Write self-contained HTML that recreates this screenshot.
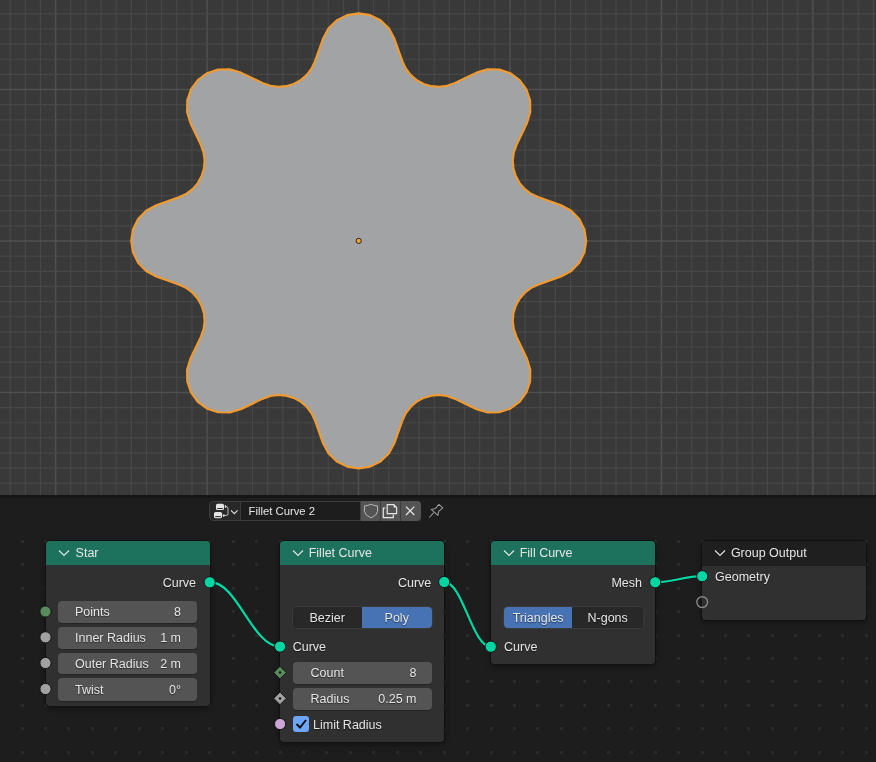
<!DOCTYPE html><html><head><meta charset="utf-8"><style>
*{margin:0;padding:0;box-sizing:border-box}
html,body{width:876px;height:762px;overflow:hidden;background:#1d1d1d;font-family:"Liberation Sans",sans-serif}
#root{position:absolute;left:0;top:0;width:876px;height:762px;will-change:transform}
.node{position:absolute;background:#303030;border-radius:4px;box-shadow:0 0 0 1px #111,0 2px 6px rgba(0,0,0,.45)}
.nh{position:absolute;left:0;top:0;right:0;height:24px;border-radius:4px 4px 0 0}
.chev{position:absolute;left:12.2px;top:8.1px}
.nt{position:absolute;left:28.7px;top:5px;font-size:12.5px;color:#e5e5e5;white-space:nowrap}
.t{position:absolute;white-space:nowrap;line-height:14px;text-shadow:0 1px 1px rgba(0,0,0,.5)}
.fld{position:absolute;background:#545454;border-radius:4px;box-shadow:0 1px 0 rgba(0,0,0,.25)}
.radio{position:absolute;display:flex;border-radius:4px;overflow:hidden;box-shadow:0 0 0 1px #3a3a3a}
.ro{height:100%;background:#282828;color:#e5e5e5;font-size:12.5px;text-align:center;line-height:22.3px;text-shadow:0 1px 1px rgba(0,0,0,.5)}
.ro.sel{background:#4772b3}
.chk{position:absolute;background:#6ea5f7;border-radius:3px}
.hdrw{position:absolute;border-radius:4px;overflow:hidden;display:flex}
.menu{position:relative;width:32px;height:100%;background:#282828;border:1px solid #3d3d3d;border-right:1px solid #3d3d3d;border-radius:4px 0 0 4px}
.tf{width:119px;height:100%;background:#1d1d1d;color:#e5e5e5;font-size:11.3px;line-height:19px;padding-left:7.5px;border-top:1px solid #3d3d3d;border-bottom:1px solid #3d3d3d}
.btns{flex:1;display:flex;background:#545454}
.menu,.tf{flex-shrink:0}.btns>div{flex:1;min-width:0;position:relative;border-left:1px solid #3d3d3d}.btns svg{display:block;position:absolute;top:0;left:0}
</style></head><body><div id="root">
<svg width="876" height="495" style="position:absolute;left:0;top:0;display:block">
<rect width="876" height="495" fill="#393939"/>
<line x1="-4.98" y1="0" x2="-4.98" y2="495" stroke="#474747" stroke-width="1.2"/><line x1="10.17" y1="0" x2="10.17" y2="495" stroke="#474747" stroke-width="1.2"/><line x1="25.31" y1="0" x2="25.31" y2="495" stroke="#474747" stroke-width="1.2"/><line x1="40.45" y1="0" x2="40.45" y2="495" stroke="#474747" stroke-width="1.2"/><line x1="55.60" y1="0" x2="55.60" y2="495" stroke="#505050" stroke-width="1.5"/><line x1="70.75" y1="0" x2="70.75" y2="495" stroke="#474747" stroke-width="1.2"/><line x1="85.89" y1="0" x2="85.89" y2="495" stroke="#474747" stroke-width="1.2"/><line x1="101.04" y1="0" x2="101.04" y2="495" stroke="#474747" stroke-width="1.2"/><line x1="116.18" y1="0" x2="116.18" y2="495" stroke="#474747" stroke-width="1.2"/><line x1="131.33" y1="0" x2="131.33" y2="495" stroke="#474747" stroke-width="1.2"/><line x1="146.47" y1="0" x2="146.47" y2="495" stroke="#474747" stroke-width="1.2"/><line x1="161.62" y1="0" x2="161.62" y2="495" stroke="#474747" stroke-width="1.2"/><line x1="176.76" y1="0" x2="176.76" y2="495" stroke="#474747" stroke-width="1.2"/><line x1="191.91" y1="0" x2="191.91" y2="495" stroke="#474747" stroke-width="1.2"/><line x1="207.05" y1="0" x2="207.05" y2="495" stroke="#505050" stroke-width="1.5"/><line x1="222.19" y1="0" x2="222.19" y2="495" stroke="#474747" stroke-width="1.2"/><line x1="237.34" y1="0" x2="237.34" y2="495" stroke="#474747" stroke-width="1.2"/><line x1="252.49" y1="0" x2="252.49" y2="495" stroke="#474747" stroke-width="1.2"/><line x1="267.63" y1="0" x2="267.63" y2="495" stroke="#474747" stroke-width="1.2"/><line x1="282.77" y1="0" x2="282.77" y2="495" stroke="#474747" stroke-width="1.2"/><line x1="297.92" y1="0" x2="297.92" y2="495" stroke="#474747" stroke-width="1.2"/><line x1="313.06" y1="0" x2="313.06" y2="495" stroke="#474747" stroke-width="1.2"/><line x1="328.21" y1="0" x2="328.21" y2="495" stroke="#474747" stroke-width="1.2"/><line x1="343.36" y1="0" x2="343.36" y2="495" stroke="#474747" stroke-width="1.2"/><line x1="358.50" y1="0" x2="358.50" y2="495" stroke="#505050" stroke-width="1.5"/><line x1="373.64" y1="0" x2="373.64" y2="495" stroke="#474747" stroke-width="1.2"/><line x1="388.79" y1="0" x2="388.79" y2="495" stroke="#474747" stroke-width="1.2"/><line x1="403.94" y1="0" x2="403.94" y2="495" stroke="#474747" stroke-width="1.2"/><line x1="419.08" y1="0" x2="419.08" y2="495" stroke="#474747" stroke-width="1.2"/><line x1="434.23" y1="0" x2="434.23" y2="495" stroke="#474747" stroke-width="1.2"/><line x1="449.37" y1="0" x2="449.37" y2="495" stroke="#474747" stroke-width="1.2"/><line x1="464.51" y1="0" x2="464.51" y2="495" stroke="#474747" stroke-width="1.2"/><line x1="479.66" y1="0" x2="479.66" y2="495" stroke="#474747" stroke-width="1.2"/><line x1="494.81" y1="0" x2="494.81" y2="495" stroke="#474747" stroke-width="1.2"/><line x1="509.95" y1="0" x2="509.95" y2="495" stroke="#505050" stroke-width="1.5"/><line x1="525.10" y1="0" x2="525.10" y2="495" stroke="#474747" stroke-width="1.2"/><line x1="540.24" y1="0" x2="540.24" y2="495" stroke="#474747" stroke-width="1.2"/><line x1="555.38" y1="0" x2="555.38" y2="495" stroke="#474747" stroke-width="1.2"/><line x1="570.53" y1="0" x2="570.53" y2="495" stroke="#474747" stroke-width="1.2"/><line x1="585.67" y1="0" x2="585.67" y2="495" stroke="#474747" stroke-width="1.2"/><line x1="600.82" y1="0" x2="600.82" y2="495" stroke="#474747" stroke-width="1.2"/><line x1="615.96" y1="0" x2="615.96" y2="495" stroke="#474747" stroke-width="1.2"/><line x1="631.11" y1="0" x2="631.11" y2="495" stroke="#474747" stroke-width="1.2"/><line x1="646.25" y1="0" x2="646.25" y2="495" stroke="#474747" stroke-width="1.2"/><line x1="661.40" y1="0" x2="661.40" y2="495" stroke="#505050" stroke-width="1.5"/><line x1="676.55" y1="0" x2="676.55" y2="495" stroke="#474747" stroke-width="1.2"/><line x1="691.69" y1="0" x2="691.69" y2="495" stroke="#474747" stroke-width="1.2"/><line x1="706.84" y1="0" x2="706.84" y2="495" stroke="#474747" stroke-width="1.2"/><line x1="721.98" y1="0" x2="721.98" y2="495" stroke="#474747" stroke-width="1.2"/><line x1="737.12" y1="0" x2="737.12" y2="495" stroke="#474747" stroke-width="1.2"/><line x1="752.27" y1="0" x2="752.27" y2="495" stroke="#474747" stroke-width="1.2"/><line x1="767.41" y1="0" x2="767.41" y2="495" stroke="#474747" stroke-width="1.2"/><line x1="782.56" y1="0" x2="782.56" y2="495" stroke="#474747" stroke-width="1.2"/><line x1="797.70" y1="0" x2="797.70" y2="495" stroke="#474747" stroke-width="1.2"/><line x1="812.85" y1="0" x2="812.85" y2="495" stroke="#505050" stroke-width="1.5"/><line x1="828.00" y1="0" x2="828.00" y2="495" stroke="#474747" stroke-width="1.2"/><line x1="843.14" y1="0" x2="843.14" y2="495" stroke="#474747" stroke-width="1.2"/><line x1="858.28" y1="0" x2="858.28" y2="495" stroke="#474747" stroke-width="1.2"/><line x1="873.43" y1="0" x2="873.43" y2="495" stroke="#474747" stroke-width="1.2"/><line x1="888.57" y1="0" x2="888.57" y2="495" stroke="#474747" stroke-width="1.2"/><line x1="0" y1="-1.32" x2="876" y2="-1.32" stroke="#474747" stroke-width="1.2"/><line x1="0" y1="13.83" x2="876" y2="13.83" stroke="#474747" stroke-width="1.2"/><line x1="0" y1="28.97" x2="876" y2="28.97" stroke="#474747" stroke-width="1.2"/><line x1="0" y1="44.12" x2="876" y2="44.12" stroke="#474747" stroke-width="1.2"/><line x1="0" y1="59.26" x2="876" y2="59.26" stroke="#474747" stroke-width="1.2"/><line x1="0" y1="74.41" x2="876" y2="74.41" stroke="#474747" stroke-width="1.2"/><line x1="0" y1="89.55" x2="876" y2="89.55" stroke="#505050" stroke-width="1.5"/><line x1="0" y1="104.69" x2="876" y2="104.69" stroke="#474747" stroke-width="1.2"/><line x1="0" y1="119.84" x2="876" y2="119.84" stroke="#474747" stroke-width="1.2"/><line x1="0" y1="134.99" x2="876" y2="134.99" stroke="#474747" stroke-width="1.2"/><line x1="0" y1="150.13" x2="876" y2="150.13" stroke="#474747" stroke-width="1.2"/><line x1="0" y1="165.28" x2="876" y2="165.28" stroke="#474747" stroke-width="1.2"/><line x1="0" y1="180.42" x2="876" y2="180.42" stroke="#474747" stroke-width="1.2"/><line x1="0" y1="195.56" x2="876" y2="195.56" stroke="#474747" stroke-width="1.2"/><line x1="0" y1="210.71" x2="876" y2="210.71" stroke="#474747" stroke-width="1.2"/><line x1="0" y1="225.85" x2="876" y2="225.85" stroke="#474747" stroke-width="1.2"/><line x1="0" y1="241.00" x2="876" y2="241.00" stroke="#505050" stroke-width="1.5"/><line x1="0" y1="256.14" x2="876" y2="256.14" stroke="#474747" stroke-width="1.2"/><line x1="0" y1="271.29" x2="876" y2="271.29" stroke="#474747" stroke-width="1.2"/><line x1="0" y1="286.44" x2="876" y2="286.44" stroke="#474747" stroke-width="1.2"/><line x1="0" y1="301.58" x2="876" y2="301.58" stroke="#474747" stroke-width="1.2"/><line x1="0" y1="316.73" x2="876" y2="316.73" stroke="#474747" stroke-width="1.2"/><line x1="0" y1="331.87" x2="876" y2="331.87" stroke="#474747" stroke-width="1.2"/><line x1="0" y1="347.01" x2="876" y2="347.01" stroke="#474747" stroke-width="1.2"/><line x1="0" y1="362.16" x2="876" y2="362.16" stroke="#474747" stroke-width="1.2"/><line x1="0" y1="377.31" x2="876" y2="377.31" stroke="#474747" stroke-width="1.2"/><line x1="0" y1="392.45" x2="876" y2="392.45" stroke="#505050" stroke-width="1.5"/><line x1="0" y1="407.60" x2="876" y2="407.60" stroke="#474747" stroke-width="1.2"/><line x1="0" y1="422.74" x2="876" y2="422.74" stroke="#474747" stroke-width="1.2"/><line x1="0" y1="437.88" x2="876" y2="437.88" stroke="#474747" stroke-width="1.2"/><line x1="0" y1="453.03" x2="876" y2="453.03" stroke="#474747" stroke-width="1.2"/><line x1="0" y1="468.17" x2="876" y2="468.17" stroke="#474747" stroke-width="1.2"/><line x1="0" y1="483.32" x2="876" y2="483.32" stroke="#474747" stroke-width="1.2"/><line x1="0" y1="498.46" x2="876" y2="498.46" stroke="#474747" stroke-width="1.2"/>
<polygon points="561.08,276.54 571.27,271.04 579.31,262.71 584.46,252.34 586.23,240.90 584.46,229.46 579.31,219.09 571.27,210.76 561.08,205.26 537.96,197.04 530.84,193.63 524.58,188.82 519.45,182.81 515.69,175.87 513.44,168.30 512.82,160.43 513.84,152.61 516.47,145.16 527.01,122.99 530.32,111.90 530.12,100.32 526.43,89.35 519.59,80.01 510.25,73.17 499.28,69.48 487.70,69.28 476.61,72.59 454.44,83.13 446.99,85.76 439.17,86.78 431.30,86.16 423.73,83.91 416.79,80.15 410.78,75.02 405.97,68.76 402.56,61.64 394.34,38.52 388.84,28.33 380.51,20.29 370.14,15.14 358.70,13.37 347.26,15.14 336.89,20.29 328.56,28.33 323.06,38.52 314.84,61.64 311.43,68.76 306.62,75.02 300.61,80.15 293.67,83.91 286.10,86.16 278.23,86.78 270.41,85.76 262.96,83.13 240.79,72.59 229.70,69.28 218.12,69.48 207.15,73.17 197.81,80.01 190.97,89.35 187.28,100.32 187.08,111.90 190.39,122.99 200.93,145.16 203.56,152.61 204.58,160.43 203.96,168.30 201.71,175.87 197.95,182.81 192.82,188.82 186.56,193.63 179.44,197.04 156.32,205.26 146.13,210.76 138.09,219.09 132.94,229.46 131.17,240.90 132.94,252.34 138.09,262.71 146.13,271.04 156.32,276.54 179.44,284.76 186.56,288.17 192.82,292.98 197.95,298.99 201.71,305.93 203.96,313.50 204.58,321.37 203.56,329.19 200.93,336.64 190.39,358.81 187.08,369.90 187.28,381.48 190.97,392.45 197.81,401.79 207.15,408.63 218.12,412.32 229.70,412.52 240.79,409.21 262.96,398.67 270.41,396.04 278.23,395.02 286.10,395.64 293.67,397.89 300.61,401.65 306.62,406.78 311.43,413.04 314.84,420.16 323.06,443.28 328.56,453.47 336.89,461.51 347.26,466.66 358.70,468.43 370.14,466.66 380.51,461.51 388.84,453.47 394.34,443.28 402.56,420.16 405.97,413.04 410.78,406.78 416.79,401.65 423.73,397.89 431.30,395.64 439.17,395.02 446.99,396.04 454.44,398.67 476.61,409.21 487.70,412.52 499.28,412.32 510.25,408.63 519.59,401.79 526.43,392.45 530.12,381.48 530.32,369.90 527.01,358.81 516.47,336.64 513.84,329.19 512.82,321.37 513.44,313.50 515.69,305.93 519.45,298.99 524.58,292.98 530.84,288.17 537.96,284.76" fill="#a2a3a5" stroke="#f29a2e" stroke-width="2.1" stroke-linejoin="round"/>
<circle cx="358.7" cy="240.9" r="2.6" fill="#f7a12a" stroke="#2a2a2a" stroke-width="1"/>
</svg>
<div style="position:absolute;left:0;top:495px;width:876px;height:2.5px;background:#161616"></div>
<svg width="876" height="762" style="position:absolute;left:0;top:0"><rect x="21" y="540" width="3" height="3" fill="#2b2b2b"/><rect x="44" y="540" width="3" height="3" fill="#2b2b2b"/><rect x="67" y="540" width="3" height="3" fill="#2b2b2b"/><rect x="91" y="540" width="3" height="3" fill="#2b2b2b"/><rect x="114" y="540" width="3" height="3" fill="#2b2b2b"/><rect x="138" y="540" width="3" height="3" fill="#2b2b2b"/><rect x="161" y="540" width="3" height="3" fill="#2b2b2b"/><rect x="185" y="540" width="3" height="3" fill="#2b2b2b"/><rect x="208" y="540" width="3" height="3" fill="#2b2b2b"/><rect x="232" y="540" width="3" height="3" fill="#2b2b2b"/><rect x="255" y="540" width="3" height="3" fill="#2b2b2b"/><rect x="279" y="540" width="3" height="3" fill="#2b2b2b"/><rect x="302" y="540" width="3" height="3" fill="#2b2b2b"/><rect x="325" y="540" width="3" height="3" fill="#2b2b2b"/><rect x="349" y="540" width="3" height="3" fill="#2b2b2b"/><rect x="372" y="540" width="3" height="3" fill="#2b2b2b"/><rect x="396" y="540" width="3" height="3" fill="#2b2b2b"/><rect x="419" y="540" width="3" height="3" fill="#2b2b2b"/><rect x="443" y="540" width="3" height="3" fill="#2b2b2b"/><rect x="466" y="540" width="3" height="3" fill="#2b2b2b"/><rect x="490" y="540" width="3" height="3" fill="#2b2b2b"/><rect x="513" y="540" width="3" height="3" fill="#2b2b2b"/><rect x="536" y="540" width="3" height="3" fill="#2b2b2b"/><rect x="560" y="540" width="3" height="3" fill="#2b2b2b"/><rect x="583" y="540" width="3" height="3" fill="#2b2b2b"/><rect x="607" y="540" width="3" height="3" fill="#2b2b2b"/><rect x="630" y="540" width="3" height="3" fill="#2b2b2b"/><rect x="654" y="540" width="3" height="3" fill="#2b2b2b"/><rect x="677" y="540" width="3" height="3" fill="#2b2b2b"/><rect x="701" y="540" width="3" height="3" fill="#2b2b2b"/><rect x="724" y="540" width="3" height="3" fill="#2b2b2b"/><rect x="747" y="540" width="3" height="3" fill="#2b2b2b"/><rect x="771" y="540" width="3" height="3" fill="#2b2b2b"/><rect x="794" y="540" width="3" height="3" fill="#2b2b2b"/><rect x="818" y="540" width="3" height="3" fill="#2b2b2b"/><rect x="841" y="540" width="3" height="3" fill="#2b2b2b"/><rect x="865" y="540" width="3" height="3" fill="#2b2b2b"/><rect x="21" y="563" width="3" height="3" fill="#2b2b2b"/><rect x="44" y="563" width="3" height="3" fill="#2b2b2b"/><rect x="67" y="563" width="3" height="3" fill="#2b2b2b"/><rect x="91" y="563" width="3" height="3" fill="#2b2b2b"/><rect x="114" y="563" width="3" height="3" fill="#2b2b2b"/><rect x="138" y="563" width="3" height="3" fill="#2b2b2b"/><rect x="161" y="563" width="3" height="3" fill="#2b2b2b"/><rect x="185" y="563" width="3" height="3" fill="#2b2b2b"/><rect x="208" y="563" width="3" height="3" fill="#2b2b2b"/><rect x="232" y="563" width="3" height="3" fill="#2b2b2b"/><rect x="255" y="563" width="3" height="3" fill="#2b2b2b"/><rect x="279" y="563" width="3" height="3" fill="#2b2b2b"/><rect x="302" y="563" width="3" height="3" fill="#2b2b2b"/><rect x="325" y="563" width="3" height="3" fill="#2b2b2b"/><rect x="349" y="563" width="3" height="3" fill="#2b2b2b"/><rect x="372" y="563" width="3" height="3" fill="#2b2b2b"/><rect x="396" y="563" width="3" height="3" fill="#2b2b2b"/><rect x="419" y="563" width="3" height="3" fill="#2b2b2b"/><rect x="443" y="563" width="3" height="3" fill="#2b2b2b"/><rect x="466" y="563" width="3" height="3" fill="#2b2b2b"/><rect x="490" y="563" width="3" height="3" fill="#2b2b2b"/><rect x="513" y="563" width="3" height="3" fill="#2b2b2b"/><rect x="536" y="563" width="3" height="3" fill="#2b2b2b"/><rect x="560" y="563" width="3" height="3" fill="#2b2b2b"/><rect x="583" y="563" width="3" height="3" fill="#2b2b2b"/><rect x="607" y="563" width="3" height="3" fill="#2b2b2b"/><rect x="630" y="563" width="3" height="3" fill="#2b2b2b"/><rect x="654" y="563" width="3" height="3" fill="#2b2b2b"/><rect x="677" y="563" width="3" height="3" fill="#2b2b2b"/><rect x="701" y="563" width="3" height="3" fill="#2b2b2b"/><rect x="724" y="563" width="3" height="3" fill="#2b2b2b"/><rect x="747" y="563" width="3" height="3" fill="#2b2b2b"/><rect x="771" y="563" width="3" height="3" fill="#2b2b2b"/><rect x="794" y="563" width="3" height="3" fill="#2b2b2b"/><rect x="818" y="563" width="3" height="3" fill="#2b2b2b"/><rect x="841" y="563" width="3" height="3" fill="#2b2b2b"/><rect x="865" y="563" width="3" height="3" fill="#2b2b2b"/><rect x="21" y="587" width="3" height="3" fill="#2b2b2b"/><rect x="44" y="587" width="3" height="3" fill="#2b2b2b"/><rect x="67" y="587" width="3" height="3" fill="#2b2b2b"/><rect x="91" y="587" width="3" height="3" fill="#2b2b2b"/><rect x="114" y="587" width="3" height="3" fill="#2b2b2b"/><rect x="138" y="587" width="3" height="3" fill="#2b2b2b"/><rect x="161" y="587" width="3" height="3" fill="#2b2b2b"/><rect x="185" y="587" width="3" height="3" fill="#2b2b2b"/><rect x="208" y="587" width="3" height="3" fill="#2b2b2b"/><rect x="232" y="587" width="3" height="3" fill="#2b2b2b"/><rect x="255" y="587" width="3" height="3" fill="#2b2b2b"/><rect x="279" y="587" width="3" height="3" fill="#2b2b2b"/><rect x="302" y="587" width="3" height="3" fill="#2b2b2b"/><rect x="325" y="587" width="3" height="3" fill="#2b2b2b"/><rect x="349" y="587" width="3" height="3" fill="#2b2b2b"/><rect x="372" y="587" width="3" height="3" fill="#2b2b2b"/><rect x="396" y="587" width="3" height="3" fill="#2b2b2b"/><rect x="419" y="587" width="3" height="3" fill="#2b2b2b"/><rect x="443" y="587" width="3" height="3" fill="#2b2b2b"/><rect x="466" y="587" width="3" height="3" fill="#2b2b2b"/><rect x="490" y="587" width="3" height="3" fill="#2b2b2b"/><rect x="513" y="587" width="3" height="3" fill="#2b2b2b"/><rect x="536" y="587" width="3" height="3" fill="#2b2b2b"/><rect x="560" y="587" width="3" height="3" fill="#2b2b2b"/><rect x="583" y="587" width="3" height="3" fill="#2b2b2b"/><rect x="607" y="587" width="3" height="3" fill="#2b2b2b"/><rect x="630" y="587" width="3" height="3" fill="#2b2b2b"/><rect x="654" y="587" width="3" height="3" fill="#2b2b2b"/><rect x="677" y="587" width="3" height="3" fill="#2b2b2b"/><rect x="701" y="587" width="3" height="3" fill="#2b2b2b"/><rect x="724" y="587" width="3" height="3" fill="#2b2b2b"/><rect x="747" y="587" width="3" height="3" fill="#2b2b2b"/><rect x="771" y="587" width="3" height="3" fill="#2b2b2b"/><rect x="794" y="587" width="3" height="3" fill="#2b2b2b"/><rect x="818" y="587" width="3" height="3" fill="#2b2b2b"/><rect x="841" y="587" width="3" height="3" fill="#2b2b2b"/><rect x="865" y="587" width="3" height="3" fill="#2b2b2b"/><rect x="21" y="610" width="3" height="3" fill="#2b2b2b"/><rect x="44" y="610" width="3" height="3" fill="#2b2b2b"/><rect x="67" y="610" width="3" height="3" fill="#2b2b2b"/><rect x="91" y="610" width="3" height="3" fill="#2b2b2b"/><rect x="114" y="610" width="3" height="3" fill="#2b2b2b"/><rect x="138" y="610" width="3" height="3" fill="#2b2b2b"/><rect x="161" y="610" width="3" height="3" fill="#2b2b2b"/><rect x="185" y="610" width="3" height="3" fill="#2b2b2b"/><rect x="208" y="610" width="3" height="3" fill="#2b2b2b"/><rect x="232" y="610" width="3" height="3" fill="#2b2b2b"/><rect x="255" y="610" width="3" height="3" fill="#2b2b2b"/><rect x="279" y="610" width="3" height="3" fill="#2b2b2b"/><rect x="302" y="610" width="3" height="3" fill="#2b2b2b"/><rect x="325" y="610" width="3" height="3" fill="#2b2b2b"/><rect x="349" y="610" width="3" height="3" fill="#2b2b2b"/><rect x="372" y="610" width="3" height="3" fill="#2b2b2b"/><rect x="396" y="610" width="3" height="3" fill="#2b2b2b"/><rect x="419" y="610" width="3" height="3" fill="#2b2b2b"/><rect x="443" y="610" width="3" height="3" fill="#2b2b2b"/><rect x="466" y="610" width="3" height="3" fill="#2b2b2b"/><rect x="490" y="610" width="3" height="3" fill="#2b2b2b"/><rect x="513" y="610" width="3" height="3" fill="#2b2b2b"/><rect x="536" y="610" width="3" height="3" fill="#2b2b2b"/><rect x="560" y="610" width="3" height="3" fill="#2b2b2b"/><rect x="583" y="610" width="3" height="3" fill="#2b2b2b"/><rect x="607" y="610" width="3" height="3" fill="#2b2b2b"/><rect x="630" y="610" width="3" height="3" fill="#2b2b2b"/><rect x="654" y="610" width="3" height="3" fill="#2b2b2b"/><rect x="677" y="610" width="3" height="3" fill="#2b2b2b"/><rect x="701" y="610" width="3" height="3" fill="#2b2b2b"/><rect x="724" y="610" width="3" height="3" fill="#2b2b2b"/><rect x="747" y="610" width="3" height="3" fill="#2b2b2b"/><rect x="771" y="610" width="3" height="3" fill="#2b2b2b"/><rect x="794" y="610" width="3" height="3" fill="#2b2b2b"/><rect x="818" y="610" width="3" height="3" fill="#2b2b2b"/><rect x="841" y="610" width="3" height="3" fill="#2b2b2b"/><rect x="865" y="610" width="3" height="3" fill="#2b2b2b"/><rect x="21" y="634" width="3" height="3" fill="#2b2b2b"/><rect x="44" y="634" width="3" height="3" fill="#2b2b2b"/><rect x="67" y="634" width="3" height="3" fill="#2b2b2b"/><rect x="91" y="634" width="3" height="3" fill="#2b2b2b"/><rect x="114" y="634" width="3" height="3" fill="#2b2b2b"/><rect x="138" y="634" width="3" height="3" fill="#2b2b2b"/><rect x="161" y="634" width="3" height="3" fill="#2b2b2b"/><rect x="185" y="634" width="3" height="3" fill="#2b2b2b"/><rect x="208" y="634" width="3" height="3" fill="#2b2b2b"/><rect x="232" y="634" width="3" height="3" fill="#2b2b2b"/><rect x="255" y="634" width="3" height="3" fill="#2b2b2b"/><rect x="279" y="634" width="3" height="3" fill="#2b2b2b"/><rect x="302" y="634" width="3" height="3" fill="#2b2b2b"/><rect x="325" y="634" width="3" height="3" fill="#2b2b2b"/><rect x="349" y="634" width="3" height="3" fill="#2b2b2b"/><rect x="372" y="634" width="3" height="3" fill="#2b2b2b"/><rect x="396" y="634" width="3" height="3" fill="#2b2b2b"/><rect x="419" y="634" width="3" height="3" fill="#2b2b2b"/><rect x="443" y="634" width="3" height="3" fill="#2b2b2b"/><rect x="466" y="634" width="3" height="3" fill="#2b2b2b"/><rect x="490" y="634" width="3" height="3" fill="#2b2b2b"/><rect x="513" y="634" width="3" height="3" fill="#2b2b2b"/><rect x="536" y="634" width="3" height="3" fill="#2b2b2b"/><rect x="560" y="634" width="3" height="3" fill="#2b2b2b"/><rect x="583" y="634" width="3" height="3" fill="#2b2b2b"/><rect x="607" y="634" width="3" height="3" fill="#2b2b2b"/><rect x="630" y="634" width="3" height="3" fill="#2b2b2b"/><rect x="654" y="634" width="3" height="3" fill="#2b2b2b"/><rect x="677" y="634" width="3" height="3" fill="#2b2b2b"/><rect x="701" y="634" width="3" height="3" fill="#2b2b2b"/><rect x="724" y="634" width="3" height="3" fill="#2b2b2b"/><rect x="747" y="634" width="3" height="3" fill="#2b2b2b"/><rect x="771" y="634" width="3" height="3" fill="#2b2b2b"/><rect x="794" y="634" width="3" height="3" fill="#2b2b2b"/><rect x="818" y="634" width="3" height="3" fill="#2b2b2b"/><rect x="841" y="634" width="3" height="3" fill="#2b2b2b"/><rect x="865" y="634" width="3" height="3" fill="#2b2b2b"/><rect x="21" y="657" width="3" height="3" fill="#2b2b2b"/><rect x="44" y="657" width="3" height="3" fill="#2b2b2b"/><rect x="67" y="657" width="3" height="3" fill="#2b2b2b"/><rect x="91" y="657" width="3" height="3" fill="#2b2b2b"/><rect x="114" y="657" width="3" height="3" fill="#2b2b2b"/><rect x="138" y="657" width="3" height="3" fill="#2b2b2b"/><rect x="161" y="657" width="3" height="3" fill="#2b2b2b"/><rect x="185" y="657" width="3" height="3" fill="#2b2b2b"/><rect x="208" y="657" width="3" height="3" fill="#2b2b2b"/><rect x="232" y="657" width="3" height="3" fill="#2b2b2b"/><rect x="255" y="657" width="3" height="3" fill="#2b2b2b"/><rect x="279" y="657" width="3" height="3" fill="#2b2b2b"/><rect x="302" y="657" width="3" height="3" fill="#2b2b2b"/><rect x="325" y="657" width="3" height="3" fill="#2b2b2b"/><rect x="349" y="657" width="3" height="3" fill="#2b2b2b"/><rect x="372" y="657" width="3" height="3" fill="#2b2b2b"/><rect x="396" y="657" width="3" height="3" fill="#2b2b2b"/><rect x="419" y="657" width="3" height="3" fill="#2b2b2b"/><rect x="443" y="657" width="3" height="3" fill="#2b2b2b"/><rect x="466" y="657" width="3" height="3" fill="#2b2b2b"/><rect x="490" y="657" width="3" height="3" fill="#2b2b2b"/><rect x="513" y="657" width="3" height="3" fill="#2b2b2b"/><rect x="536" y="657" width="3" height="3" fill="#2b2b2b"/><rect x="560" y="657" width="3" height="3" fill="#2b2b2b"/><rect x="583" y="657" width="3" height="3" fill="#2b2b2b"/><rect x="607" y="657" width="3" height="3" fill="#2b2b2b"/><rect x="630" y="657" width="3" height="3" fill="#2b2b2b"/><rect x="654" y="657" width="3" height="3" fill="#2b2b2b"/><rect x="677" y="657" width="3" height="3" fill="#2b2b2b"/><rect x="701" y="657" width="3" height="3" fill="#2b2b2b"/><rect x="724" y="657" width="3" height="3" fill="#2b2b2b"/><rect x="747" y="657" width="3" height="3" fill="#2b2b2b"/><rect x="771" y="657" width="3" height="3" fill="#2b2b2b"/><rect x="794" y="657" width="3" height="3" fill="#2b2b2b"/><rect x="818" y="657" width="3" height="3" fill="#2b2b2b"/><rect x="841" y="657" width="3" height="3" fill="#2b2b2b"/><rect x="865" y="657" width="3" height="3" fill="#2b2b2b"/><rect x="21" y="680" width="3" height="3" fill="#2b2b2b"/><rect x="44" y="680" width="3" height="3" fill="#2b2b2b"/><rect x="67" y="680" width="3" height="3" fill="#2b2b2b"/><rect x="91" y="680" width="3" height="3" fill="#2b2b2b"/><rect x="114" y="680" width="3" height="3" fill="#2b2b2b"/><rect x="138" y="680" width="3" height="3" fill="#2b2b2b"/><rect x="161" y="680" width="3" height="3" fill="#2b2b2b"/><rect x="185" y="680" width="3" height="3" fill="#2b2b2b"/><rect x="208" y="680" width="3" height="3" fill="#2b2b2b"/><rect x="232" y="680" width="3" height="3" fill="#2b2b2b"/><rect x="255" y="680" width="3" height="3" fill="#2b2b2b"/><rect x="279" y="680" width="3" height="3" fill="#2b2b2b"/><rect x="302" y="680" width="3" height="3" fill="#2b2b2b"/><rect x="325" y="680" width="3" height="3" fill="#2b2b2b"/><rect x="349" y="680" width="3" height="3" fill="#2b2b2b"/><rect x="372" y="680" width="3" height="3" fill="#2b2b2b"/><rect x="396" y="680" width="3" height="3" fill="#2b2b2b"/><rect x="419" y="680" width="3" height="3" fill="#2b2b2b"/><rect x="443" y="680" width="3" height="3" fill="#2b2b2b"/><rect x="466" y="680" width="3" height="3" fill="#2b2b2b"/><rect x="490" y="680" width="3" height="3" fill="#2b2b2b"/><rect x="513" y="680" width="3" height="3" fill="#2b2b2b"/><rect x="536" y="680" width="3" height="3" fill="#2b2b2b"/><rect x="560" y="680" width="3" height="3" fill="#2b2b2b"/><rect x="583" y="680" width="3" height="3" fill="#2b2b2b"/><rect x="607" y="680" width="3" height="3" fill="#2b2b2b"/><rect x="630" y="680" width="3" height="3" fill="#2b2b2b"/><rect x="654" y="680" width="3" height="3" fill="#2b2b2b"/><rect x="677" y="680" width="3" height="3" fill="#2b2b2b"/><rect x="701" y="680" width="3" height="3" fill="#2b2b2b"/><rect x="724" y="680" width="3" height="3" fill="#2b2b2b"/><rect x="747" y="680" width="3" height="3" fill="#2b2b2b"/><rect x="771" y="680" width="3" height="3" fill="#2b2b2b"/><rect x="794" y="680" width="3" height="3" fill="#2b2b2b"/><rect x="818" y="680" width="3" height="3" fill="#2b2b2b"/><rect x="841" y="680" width="3" height="3" fill="#2b2b2b"/><rect x="865" y="680" width="3" height="3" fill="#2b2b2b"/><rect x="21" y="704" width="3" height="3" fill="#2b2b2b"/><rect x="44" y="704" width="3" height="3" fill="#2b2b2b"/><rect x="67" y="704" width="3" height="3" fill="#2b2b2b"/><rect x="91" y="704" width="3" height="3" fill="#2b2b2b"/><rect x="114" y="704" width="3" height="3" fill="#2b2b2b"/><rect x="138" y="704" width="3" height="3" fill="#2b2b2b"/><rect x="161" y="704" width="3" height="3" fill="#2b2b2b"/><rect x="185" y="704" width="3" height="3" fill="#2b2b2b"/><rect x="208" y="704" width="3" height="3" fill="#2b2b2b"/><rect x="232" y="704" width="3" height="3" fill="#2b2b2b"/><rect x="255" y="704" width="3" height="3" fill="#2b2b2b"/><rect x="279" y="704" width="3" height="3" fill="#2b2b2b"/><rect x="302" y="704" width="3" height="3" fill="#2b2b2b"/><rect x="325" y="704" width="3" height="3" fill="#2b2b2b"/><rect x="349" y="704" width="3" height="3" fill="#2b2b2b"/><rect x="372" y="704" width="3" height="3" fill="#2b2b2b"/><rect x="396" y="704" width="3" height="3" fill="#2b2b2b"/><rect x="419" y="704" width="3" height="3" fill="#2b2b2b"/><rect x="443" y="704" width="3" height="3" fill="#2b2b2b"/><rect x="466" y="704" width="3" height="3" fill="#2b2b2b"/><rect x="490" y="704" width="3" height="3" fill="#2b2b2b"/><rect x="513" y="704" width="3" height="3" fill="#2b2b2b"/><rect x="536" y="704" width="3" height="3" fill="#2b2b2b"/><rect x="560" y="704" width="3" height="3" fill="#2b2b2b"/><rect x="583" y="704" width="3" height="3" fill="#2b2b2b"/><rect x="607" y="704" width="3" height="3" fill="#2b2b2b"/><rect x="630" y="704" width="3" height="3" fill="#2b2b2b"/><rect x="654" y="704" width="3" height="3" fill="#2b2b2b"/><rect x="677" y="704" width="3" height="3" fill="#2b2b2b"/><rect x="701" y="704" width="3" height="3" fill="#2b2b2b"/><rect x="724" y="704" width="3" height="3" fill="#2b2b2b"/><rect x="747" y="704" width="3" height="3" fill="#2b2b2b"/><rect x="771" y="704" width="3" height="3" fill="#2b2b2b"/><rect x="794" y="704" width="3" height="3" fill="#2b2b2b"/><rect x="818" y="704" width="3" height="3" fill="#2b2b2b"/><rect x="841" y="704" width="3" height="3" fill="#2b2b2b"/><rect x="865" y="704" width="3" height="3" fill="#2b2b2b"/><rect x="21" y="727" width="3" height="3" fill="#2b2b2b"/><rect x="44" y="727" width="3" height="3" fill="#2b2b2b"/><rect x="67" y="727" width="3" height="3" fill="#2b2b2b"/><rect x="91" y="727" width="3" height="3" fill="#2b2b2b"/><rect x="114" y="727" width="3" height="3" fill="#2b2b2b"/><rect x="138" y="727" width="3" height="3" fill="#2b2b2b"/><rect x="161" y="727" width="3" height="3" fill="#2b2b2b"/><rect x="185" y="727" width="3" height="3" fill="#2b2b2b"/><rect x="208" y="727" width="3" height="3" fill="#2b2b2b"/><rect x="232" y="727" width="3" height="3" fill="#2b2b2b"/><rect x="255" y="727" width="3" height="3" fill="#2b2b2b"/><rect x="279" y="727" width="3" height="3" fill="#2b2b2b"/><rect x="302" y="727" width="3" height="3" fill="#2b2b2b"/><rect x="325" y="727" width="3" height="3" fill="#2b2b2b"/><rect x="349" y="727" width="3" height="3" fill="#2b2b2b"/><rect x="372" y="727" width="3" height="3" fill="#2b2b2b"/><rect x="396" y="727" width="3" height="3" fill="#2b2b2b"/><rect x="419" y="727" width="3" height="3" fill="#2b2b2b"/><rect x="443" y="727" width="3" height="3" fill="#2b2b2b"/><rect x="466" y="727" width="3" height="3" fill="#2b2b2b"/><rect x="490" y="727" width="3" height="3" fill="#2b2b2b"/><rect x="513" y="727" width="3" height="3" fill="#2b2b2b"/><rect x="536" y="727" width="3" height="3" fill="#2b2b2b"/><rect x="560" y="727" width="3" height="3" fill="#2b2b2b"/><rect x="583" y="727" width="3" height="3" fill="#2b2b2b"/><rect x="607" y="727" width="3" height="3" fill="#2b2b2b"/><rect x="630" y="727" width="3" height="3" fill="#2b2b2b"/><rect x="654" y="727" width="3" height="3" fill="#2b2b2b"/><rect x="677" y="727" width="3" height="3" fill="#2b2b2b"/><rect x="701" y="727" width="3" height="3" fill="#2b2b2b"/><rect x="724" y="727" width="3" height="3" fill="#2b2b2b"/><rect x="747" y="727" width="3" height="3" fill="#2b2b2b"/><rect x="771" y="727" width="3" height="3" fill="#2b2b2b"/><rect x="794" y="727" width="3" height="3" fill="#2b2b2b"/><rect x="818" y="727" width="3" height="3" fill="#2b2b2b"/><rect x="841" y="727" width="3" height="3" fill="#2b2b2b"/><rect x="865" y="727" width="3" height="3" fill="#2b2b2b"/><rect x="21" y="751" width="3" height="3" fill="#2b2b2b"/><rect x="44" y="751" width="3" height="3" fill="#2b2b2b"/><rect x="67" y="751" width="3" height="3" fill="#2b2b2b"/><rect x="91" y="751" width="3" height="3" fill="#2b2b2b"/><rect x="114" y="751" width="3" height="3" fill="#2b2b2b"/><rect x="138" y="751" width="3" height="3" fill="#2b2b2b"/><rect x="161" y="751" width="3" height="3" fill="#2b2b2b"/><rect x="185" y="751" width="3" height="3" fill="#2b2b2b"/><rect x="208" y="751" width="3" height="3" fill="#2b2b2b"/><rect x="232" y="751" width="3" height="3" fill="#2b2b2b"/><rect x="255" y="751" width="3" height="3" fill="#2b2b2b"/><rect x="279" y="751" width="3" height="3" fill="#2b2b2b"/><rect x="302" y="751" width="3" height="3" fill="#2b2b2b"/><rect x="325" y="751" width="3" height="3" fill="#2b2b2b"/><rect x="349" y="751" width="3" height="3" fill="#2b2b2b"/><rect x="372" y="751" width="3" height="3" fill="#2b2b2b"/><rect x="396" y="751" width="3" height="3" fill="#2b2b2b"/><rect x="419" y="751" width="3" height="3" fill="#2b2b2b"/><rect x="443" y="751" width="3" height="3" fill="#2b2b2b"/><rect x="466" y="751" width="3" height="3" fill="#2b2b2b"/><rect x="490" y="751" width="3" height="3" fill="#2b2b2b"/><rect x="513" y="751" width="3" height="3" fill="#2b2b2b"/><rect x="536" y="751" width="3" height="3" fill="#2b2b2b"/><rect x="560" y="751" width="3" height="3" fill="#2b2b2b"/><rect x="583" y="751" width="3" height="3" fill="#2b2b2b"/><rect x="607" y="751" width="3" height="3" fill="#2b2b2b"/><rect x="630" y="751" width="3" height="3" fill="#2b2b2b"/><rect x="654" y="751" width="3" height="3" fill="#2b2b2b"/><rect x="677" y="751" width="3" height="3" fill="#2b2b2b"/><rect x="701" y="751" width="3" height="3" fill="#2b2b2b"/><rect x="724" y="751" width="3" height="3" fill="#2b2b2b"/><rect x="747" y="751" width="3" height="3" fill="#2b2b2b"/><rect x="771" y="751" width="3" height="3" fill="#2b2b2b"/><rect x="794" y="751" width="3" height="3" fill="#2b2b2b"/><rect x="818" y="751" width="3" height="3" fill="#2b2b2b"/><rect x="841" y="751" width="3" height="3" fill="#2b2b2b"/><rect x="865" y="751" width="3" height="3" fill="#2b2b2b"/></svg>
<div class="hdrw" style="left:209px;top:501px;width:211.5px;height:19.5px">
<div class="menu"><svg width="31" height="19" viewBox="0 0 31 19" style="position:absolute;left:-1px;top:-1px">
<rect x="7" y="2.8" width="8" height="6.2" rx="1.6" fill="#e6e6e6"/><rect x="8.3" y="7" width="5.5" height="1" fill="#282828"/>
<rect x="5" y="11" width="8" height="6.2" rx="1.6" fill="#e6e6e6"/><rect x="6.3" y="15.1" width="5.5" height="1" fill="#282828"/>
<path d="M16.3 4.3 L17.3 5.5 L16.3 6.7 Z" fill="#e6e6e6" stroke="#e6e6e6" stroke-width="0.8"/>
<path d="M17 5.5 Q19 5.5 19 7.5 L19 12.5 Q19 14.5 17 14.5 L15 14.5" fill="none" stroke="#cfcfcf" stroke-width="0.9"/>
<path d="M13.8 14.5 L15 13.3 L15 15.7 Z" fill="#e6e6e6" stroke="#e6e6e6" stroke-width="0.6"/>
<path d="M22 9.3 L25.3 12.6 L28.6 9.3" fill="none" stroke="#e0e0e0" stroke-width="1.1"/>
</svg></div><div class="tf">Fillet Curve 2</div><div class="btns">
<div class="b1"><svg width="20" height="19" viewBox="0 0 20 19"><path d="M10 3.2 Q12.8 4.8 16.5 4.9 L16.5 10.5 Q16 14.5 10 16.8 Q4 14.5 3.5 10.5 L3.5 4.9 Q7.2 4.8 10 3.2 Z" fill="none" stroke="#b4b4b4" stroke-width="1"/></svg></div>
<div class="b2"><svg width="20" height="19" viewBox="0 0 20 19"><path d="M4.3 7 L2.3 7 L2.3 16.6 L12.3 16.6 L12.3 13.4" fill="none" stroke="#e6e6e6" stroke-width="1.2"/><path d="M6.2 3.6 L12.8 3.6 L15.6 6.4 L15.6 12.7 L6.2 12.7 Z" fill="none" stroke="#e6e6e6" stroke-width="1.2"/><path d="M12.6 3.2 L16 6.6 L12.6 6.6 Z" fill="#e6e6e6"/></svg></div>
<div class="b3"><svg width="20" height="19" viewBox="0 0 20 19"><path d="M5 5.6 L13.3 14 M13.3 5.6 L5 14" fill="none" stroke="#e6e6e6" stroke-width="1.2"/></svg></div>
</div></div>
<svg width="24" height="24" style="position:absolute;left:424px;top:500px"><path d="M7.2 9.4 L11.7 8.4 L14.9 4.3 L18.8 7.8 L14.6 11.3 L13.9 15.3 Z M9.8 12.7 L5.3 17.5" fill="none" stroke="#9a9a9a" stroke-width="1.05" stroke-linejoin="round"/></svg>

<svg width="876" height="762" style="position:absolute;left:0;top:0"><path d="M209.7 582 C237.86 582 251.94 646.6 280.1 646.6" fill="none" stroke="#151515" stroke-width="3.8"/><path d="M209.7 582 C237.86 582 251.94 646.6 280.1 646.6" fill="none" stroke="#00d6a3" stroke-width="2.3"/><path d="M444.2 582 C462.84 582 472.16 646.7 490.8 646.7" fill="none" stroke="#151515" stroke-width="3.8"/><path d="M444.2 582 C462.84 582 472.16 646.7 490.8 646.7" fill="none" stroke="#00d6a3" stroke-width="2.3"/><path d="M655.2 582.3 C674.0 582.3 683.4000000000001 576.2 702.2 576.2" fill="none" stroke="#151515" stroke-width="3.8"/><path d="M655.2 582.3 C674.0 582.3 683.4000000000001 576.2 702.2 576.2" fill="none" stroke="#00d6a3" stroke-width="2.3"/></svg>
<div class="node" style="left:45.5px;top:541px;width:164.5px;height:165px">
<div class="nh" style="background:#1d725e;"><svg class="chev" width="12" height="8" viewBox="0 0 12 8"><path d="M1 1.5 L6 6.5 L11 1.5" fill="none" stroke="#e6e6e6" stroke-width="1.1"/></svg><span class="nt" style="margin-left:1.4px">Star</span></div>
</div><div class="node" style="left:280px;top:541px;width:164px;height:201px">
<div class="nh" style="background:#1d725e;"><svg class="chev" width="12" height="8" viewBox="0 0 12 8"><path d="M1 1.5 L6 6.5 L11 1.5" fill="none" stroke="#e6e6e6" stroke-width="1.1"/></svg><span class="nt" style="margin-left:0px">Fillet Curve</span></div>
</div><div class="node" style="left:491px;top:541px;width:164px;height:122.5px">
<div class="nh" style="background:#1d725e;"><svg class="chev" width="12" height="8" viewBox="0 0 12 8"><path d="M1 1.5 L6 6.5 L11 1.5" fill="none" stroke="#e6e6e6" stroke-width="1.1"/></svg><span class="nt" style="margin-left:0px">Fill Curve</span></div>
</div><div class="node" style="left:702.2px;top:540.5px;width:164.0px;height:79.5px">
<div class="nh" style="background:#1f1f1f;height:25.3px"><svg class="chev" width="12" height="8" viewBox="0 0 12 8"><path d="M1 1.5 L6 6.5 L11 1.5" fill="none" stroke="#e6e6e6" stroke-width="1.1"/></svg><span class="nt" style="margin-left:0px">Group Output</span></div>
</div><div class="fld" style="left:57.5px;top:601px;width:139.5px;height:21.5px"></div><div class="t" style="left:75px;top:605.05px;font-size:12.5px;color:#e5e5e5;">Points</div><div class="t" style="right:695px;top:605.05px;font-size:12.5px;color:#e5e5e5;text-align:right;">8</div><div class="fld" style="left:57.5px;top:627px;width:139.5px;height:21.5px"></div><div class="t" style="left:75px;top:631.05px;font-size:12.5px;color:#e5e5e5;">Inner Radius</div><div class="t" style="right:695px;top:631.05px;font-size:12.5px;color:#e5e5e5;text-align:right;">1 m</div><div class="fld" style="left:57.5px;top:652.5px;width:139.5px;height:21.5px"></div><div class="t" style="left:75px;top:656.55px;font-size:12.5px;color:#e5e5e5;">Outer Radius</div><div class="t" style="right:695px;top:656.55px;font-size:12.5px;color:#e5e5e5;text-align:right;">2 m</div><div class="fld" style="left:57.5px;top:678px;width:139.5px;height:22.5px"></div><div class="t" style="left:75px;top:682.55px;font-size:12.5px;color:#e5e5e5;">Twist</div><div class="t" style="right:695px;top:682.55px;font-size:12.5px;color:#e5e5e5;text-align:right;">0°</div><div class="t" style="right:680px;top:576px;font-size:12.5px;color:#e5e5e5;text-align:right;">Curve</div><div class="radio" style="left:293px;top:606.8px;width:139px;height:21.3px"><div class="ro" style="width:68.5px">Bezier</div><div class="ro sel" style="width:70.5px">Poly</div></div><div class="t" style="right:444.7px;top:576px;font-size:12.5px;color:#e5e5e5;text-align:right;">Curve</div><div class="t" style="left:292.7px;top:640px;font-size:12.5px;color:#e5e5e5;">Curve</div><div class="fld" style="left:293px;top:662px;width:139px;height:21.5px"></div><div class="t" style="left:310.5px;top:666.05px;font-size:12.5px;color:#e5e5e5;">Count</div><div class="t" style="right:459.5px;top:666.05px;font-size:12.5px;color:#e5e5e5;text-align:right;">8</div><div class="fld" style="left:293px;top:688px;width:139px;height:21.5px"></div><div class="t" style="left:310.5px;top:692.05px;font-size:12.5px;color:#e5e5e5;">Radius</div><div class="t" style="right:459.5px;top:692.05px;font-size:12.5px;color:#e5e5e5;text-align:right;">0.25 m</div><div class="chk" style="left:293px;top:716px;width:16px;height:16px"><svg width="16" height="16" viewBox="0 0 16 16" style="position:absolute;left:0;top:0"><path d="M3.5 8 L7 11.5 L13 4" fill="none" stroke="#111" stroke-width="2"/></svg></div><div class="t" style="left:313px;top:717.5px;font-size:12.5px;color:#e5e5e5;">Limit Radius</div><div class="t" style="right:234px;top:576px;font-size:12.5px;color:#e5e5e5;text-align:right;">Mesh</div><div class="radio" style="left:504px;top:606.6px;width:139.5px;height:21.5px"><div class="ro sel" style="width:68.3px">Triangles</div><div class="ro" style="width:70.7px">N-gons</div></div><div class="t" style="left:504px;top:640px;font-size:12.5px;color:#e5e5e5;">Curve</div><div class="t" style="left:715px;top:570px;font-size:12.5px;color:#e5e5e5;">Geometry</div>
<svg width="876" height="762" style="position:absolute;left:0;top:0"><circle cx="209.7" cy="582.3" r="5.6" fill="#00d6a3" stroke="#141414" stroke-width="1"/><circle cx="45.5" cy="611.5" r="5.6" fill="#598c5c" stroke="#141414" stroke-width="1"/><circle cx="45.5" cy="637.3" r="5.6" fill="#a1a1a1" stroke="#141414" stroke-width="1"/><circle cx="45.5" cy="663" r="5.6" fill="#a1a1a1" stroke="#141414" stroke-width="1"/><circle cx="45.5" cy="689" r="5.6" fill="#a1a1a1" stroke="#141414" stroke-width="1"/><circle cx="444.2" cy="582" r="5.6" fill="#00d6a3" stroke="#141414" stroke-width="1"/><circle cx="280.1" cy="646.6" r="5.6" fill="#00d6a3" stroke="#141414" stroke-width="1"/><path d="M280 666.3000000000001 L286.3 672.6 L280 678.9 L273.7 672.6 Z" fill="#598c5c" stroke="#141414" stroke-width="1"/><circle cx="280" cy="672.6" r="1.25" fill="#141414"/><path d="M280 692.1 L286.3 698.4 L280 704.6999999999999 L273.7 698.4 Z" fill="#a1a1a1" stroke="#141414" stroke-width="1"/><circle cx="280" cy="698.4" r="1.25" fill="#141414"/><circle cx="280.1" cy="724" r="5.6" fill="#cca6d6" stroke="#141414" stroke-width="1"/><circle cx="655.2" cy="582.3" r="5.6" fill="#00d6a3" stroke="#141414" stroke-width="1"/><circle cx="490.8" cy="646.7" r="5.6" fill="#00d6a3" stroke="#141414" stroke-width="1"/><circle cx="702.2" cy="576.2" r="5.6" fill="#00d6a3" stroke="#141414" stroke-width="1"/><circle cx="702.2" cy="602.1" r="5.4" fill="none" stroke="#8a8a8a" stroke-width="1.4"/></svg>
</div></body></html>
